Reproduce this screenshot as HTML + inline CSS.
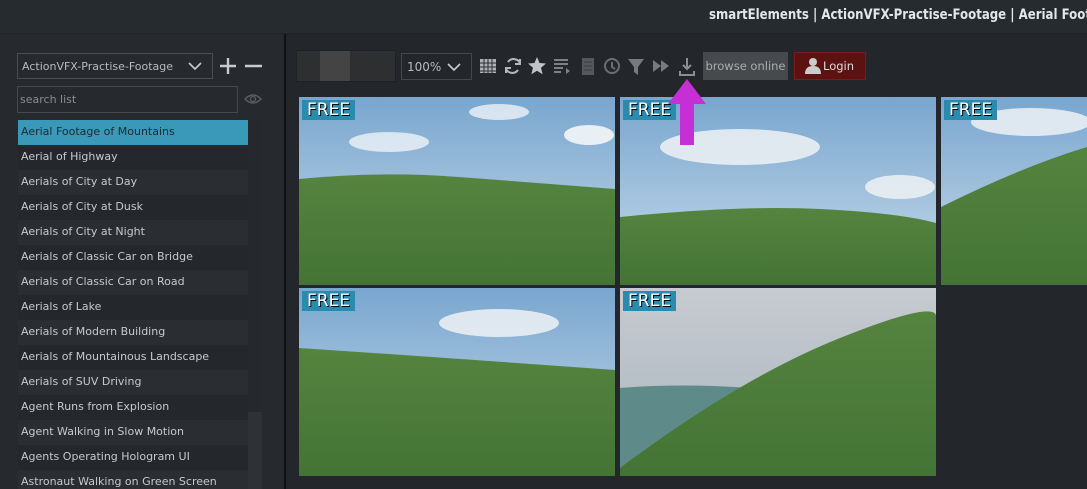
<!DOCTYPE html><html><head><meta charset="utf-8"><style>
*{margin:0;padding:0;box-sizing:border-box}
html,body{width:1087px;height:489px;overflow:hidden}
body{background:#24282c;font-family:"DejaVu Sans","Liberation Sans",sans-serif;position:relative}
.abs{position:absolute}
.title{left:0;top:0;width:1087px;height:34px;background:#262b30;border-bottom:1px solid #1f2326;overflow:hidden}
.title span{position:absolute;left:709px;top:7px;color:#e4e6e8;font-weight:bold;font-size:14px;white-space:nowrap;transform:scaleX(0.84);transform-origin:left}
.left{left:0;top:34px;width:284px;height:455px;background:#262a2e}
.vline{left:284px;top:34px;width:2px;height:455px;background:#111}
.combo{left:17px;top:53px;width:196px;height:26px;border:1px solid #4a4e52;color:#b8bbbe;font-size:11px;padding:6px 4px;white-space:nowrap}
.search{left:17px;top:86px;width:221px;height:27px;border:1px solid #45494d;color:#8a8d90;font-size:11px;padding:6px 2px}
.row{left:18px;width:230px;height:25px;font-size:11px;color:#c7c9cb;padding:5px 3px;white-space:nowrap;overflow:hidden}
.main{left:286px;top:34px;width:801px;height:455px;background:#23272b}
.tile{position:absolute;width:316px;height:188px;overflow:hidden}
.free{position:absolute;left:3px;top:3px;background:#2b8bae;color:#fff;font-size:17px;padding:0 5px;height:20px;line-height:20px;text-shadow:1px 1px 0 #000}
</style></head><body>
<div class="abs title"><span>smartElements | ActionVFX-Practise-Footage | Aerial Footage of Mountains</span></div>
<div class="abs left"></div>
<div class="abs vline"></div>
<div class="abs combo">ActionVFX-Practise-Footage<svg class="abs" style="left:170px;top:8px" width="14" height="9"><path d="M1 1l6 6 6-6" stroke="#ccc" stroke-width="1.6" fill="none"/></svg></div>
<svg class="abs" style="left:219px;top:57px" width="44" height="18"><path d="M9 1v16M1 9h16M26 9h17" stroke="#c8cacc" stroke-width="2.4"/></svg>
<div class="abs search">search list</div>
<svg class="abs" style="left:244px;top:93px" width="18" height="12"><path d="M1 6Q9-2 17 6Q9 14 1 6Z" stroke="#5b5f63" stroke-width="1.4" fill="none"/><circle cx="9" cy="6" r="2.5" stroke="#5b5f63" stroke-width="1.3" fill="none"/></svg>
<div class="abs" style="left:248px;top:120px;width:14px;height:292px;background:#25292d"></div>
<div class="abs" style="left:248px;top:412px;width:14px;height:77px;background:#2f3234"></div>
<div class="abs row" style="top:120px;background:#3a98b8;color:#1e2a30">Aerial Footage of Mountains</div>
<div class="abs row" style="top:145px;background:#24282c">Aerial of Highway</div>
<div class="abs row" style="top:170px;background:#2a2e32">Aerials of City at Day</div>
<div class="abs row" style="top:195px;background:#24282c">Aerials of City at Dusk</div>
<div class="abs row" style="top:220px;background:#2a2e32">Aerials of City at Night</div>
<div class="abs row" style="top:245px;background:#24282c">Aerials of Classic Car on Bridge</div>
<div class="abs row" style="top:270px;background:#2a2e32">Aerials of Classic Car on Road</div>
<div class="abs row" style="top:295px;background:#24282c">Aerials of Lake</div>
<div class="abs row" style="top:320px;background:#2a2e32">Aerials of Modern Building</div>
<div class="abs row" style="top:345px;background:#24282c">Aerials of Mountainous Landscape</div>
<div class="abs row" style="top:370px;background:#2a2e32">Aerials of SUV Driving</div>
<div class="abs row" style="top:395px;background:#24282c">Agent Runs from Explosion</div>
<div class="abs row" style="top:420px;background:#2a2e32">Agent Walking in Slow Motion</div>
<div class="abs row" style="top:445px;background:#24282c">Agents Operating Hologram UI</div>
<div class="abs row" style="top:470px;height:19px;background:#2a2e32">Astronaut Walking on Green Screen</div>
<div class="abs main"></div>
<div class="abs" style="left:296px;top:50px;width:100px;height:32px;background:#2d2f31;border:1px solid #1f2224"></div>
<div class="abs" style="left:320px;top:51px;width:30px;height:30px;background:#444"></div>
<div class="abs" style="left:401px;top:53px;width:71px;height:27px;border:1px solid #44484c;color:#b8bbbe;font-size:12px;padding:6px 5px">100%<svg class="abs" style="left:45px;top:9px" width="14" height="9"><path d="M1 1l6 6 6-6" stroke="#ccc" stroke-width="1.6" fill="none"/></svg></div>
<svg class="abs" style="left:478px;top:56px" width="220" height="22">
<rect x="2" y="3" width="16" height="14" fill="#b0b3b6"/>
<path d="M6 3v14M10 3v14M14 3v14M2 7h16M2 11h16M2 15h16" stroke="#2a2e32" stroke-width="1"/>
<path d="M28 13a7 7 0 0 0 12 1M42 7a7 7 0 0 0-12-1M28 17v-5h5M42 3v5h-5" stroke="#b5b8bb" stroke-width="2" fill="none"/>
<path d="M59 1l2.5 6 6.5.5-5 4.3 1.6 6.4L59 14.7 53.4 18.2 55 11.8 50 7.5l6.5-.5z" fill="#c2c4c6"/>
<path d="M76 4h14M76 8h14M76 12h9M76 16h7" stroke="#7d8185" stroke-width="2"/><path d="M88 12l4 3-4 3z" fill="#7d8185"/>
<rect x="104" y="2" width="12" height="17" fill="#55595d"/><path d="M106 6h8M106 10h8M106 14h8" stroke="#3a3d40"/>
<circle cx="134" cy="10" r="7" stroke="#6b6f73" stroke-width="2" fill="none"/><path d="M134 6v5l3 2" stroke="#6b6f73" stroke-width="2" fill="none"/>
<path d="M150 3h16l-6 8v8l-4-3v-5z" fill="#777b7f"/>
<path d="M175 4l8 6-8 6zM183 4l8 6-8 6z" fill="#777b7f"/>
<path d="M209 2v11M205 9l4 4 4-4M202 15v4h14v-4" stroke="#8a8e92" stroke-width="2" fill="none"/>
</svg>
<div class="abs" style="left:703px;top:52px;width:85px;height:28px;background:#474a4c;color:#a9acae;font-size:11.5px;line-height:28px;text-align:center">browse online</div>
<div class="abs" style="left:794px;top:52px;width:72px;height:28px;background:#5d1212;border:1px solid #7a1c1c;color:#ddd;font-size:11.5px;line-height:26px;padding-left:28px">Login</div>
<svg class="abs" style="left:805px;top:57px" width="16" height="17"><circle cx="8" cy="5" r="4" fill="#ccc"/><path d="M0 17q0-8 8-8t8 8z" fill="#ccc"/></svg>
<svg width="0" height="0" style="position:absolute"><defs>
<linearGradient id="sky" x1="0" y1="0" x2="0" y2="1"><stop offset="0" stop-color="#79a6cf"/><stop offset="1" stop-color="#c8dbea"/></linearGradient>
<linearGradient id="gr" x1="0" y1="0" x2="0" y2="1"><stop offset="0" stop-color="#55843f"/><stop offset="1" stop-color="#447435"/></linearGradient>
<linearGradient id="sky2" x1="0" y1="0" x2="0" y2="1"><stop offset="0" stop-color="#c7cbd0"/><stop offset="1" stop-color="#a8b4bf"/></linearGradient>
</defs></svg>
<div class="tile" style="left:299px;top:97px"><svg width="316" height="188"><rect width="316" height="188" fill="url(#sky)"/><ellipse cx="90" cy="45" rx="40" ry="10" fill="#eef3f7" opacity=".8"/><ellipse cx="290" cy="38" rx="25" ry="10" fill="#f3f6f8" opacity=".9"/><ellipse cx="200" cy="15" rx="30" ry="8" fill="#eef3f7" opacity=".8"/><path d="M0 82Q80 74 160 80T316 92V188H0z" fill="url(#gr)"/></svg><div class="free">FREE</div></div>
<div class="tile" style="left:620px;top:97px"><svg width="316" height="188"><rect width="316" height="188" fill="url(#sky)"/><ellipse cx="120" cy="50" rx="80" ry="18" fill="#eef2f5" opacity=".85"/><ellipse cx="280" cy="90" rx="35" ry="12" fill="#eef2f5" opacity=".85"/><path d="M0 120Q120 108 200 112T316 126V188H0z" fill="url(#gr)"/></svg><div class="free">FREE</div></div>
<div class="tile" style="left:941px;top:97px;width:146px"><svg width="146" height="188"><rect width="146" height="188" fill="url(#sky)"/><ellipse cx="90" cy="25" rx="60" ry="14" fill="#eef2f5" opacity=".85"/><path d="M0 110Q80 70 146 50V188H0z" fill="url(#gr)"/></svg><div class="free">FREE</div></div>
<div class="tile" style="left:299px;top:288px"><svg width="316" height="188"><rect width="316" height="188" fill="url(#sky)"/><ellipse cx="200" cy="35" rx="60" ry="14" fill="#eef2f5" opacity=".85"/><path d="M0 60Q150 70 316 82V188H0z" fill="url(#gr)"/></svg><div class="free">FREE</div></div>
<div class="tile" style="left:620px;top:288px"><svg width="316" height="188"><rect width="316" height="188" fill="url(#sky2)"/><path d="M0 100Q60 95 130 100V188H0z" fill="#5f8a8a"/><path d="M0 180Q120 90 220 50T316 30V188H0z" fill="url(#gr)"/></svg><div class="free">FREE</div></div>
<svg class="abs" style="left:667px;top:78px" width="40" height="68"><path d="M20 1L39 26H27V67H13V26H1z" fill="#c72fd6"/></svg>
</body></html>
